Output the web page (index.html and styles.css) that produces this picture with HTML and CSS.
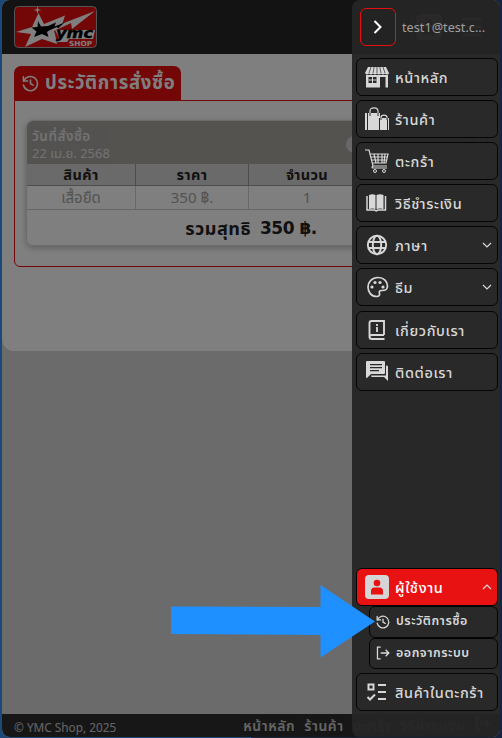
FILE: index.html
```
<!DOCTYPE html>
<html lang="th">
<head>
<meta charset="utf-8">
<title>YMC Shop</title>
<link rel="stylesheet" href="styles.css">
</head>
<body>
<svg class="defs" width="0" height="0">
  <defs>
    <symbol id="history" viewBox="0 0 24 24"><g fill="none" stroke="currentColor" stroke-width="2.200" stroke-linecap="round" stroke-linejoin="round"><path d="M2.500 8.500a10 10 0 1 1-.5 5.500"/><path d="M2 2.500V8.500H8"/><path d="M12 7v5.300l3.800 2"/></g></symbol>
    <symbol id="logout" viewBox="0 0 24 24"><path d="M8 2H2.500v20H8M8 12h14M16.500 6.500l5.500 5.500-5.500 5.500" fill="none" stroke="currentColor" stroke-width="2.200"/></symbol>
    <symbol id="down" viewBox="0 0 10 6"><path d="M1 1l4 4 4-4" fill="none" stroke="currentColor" stroke-width="1.200"/></symbol>
    <symbol id="user" viewBox="0 0 24 24"><rect width="24" height="24" rx="4" fill="currentColor"/><circle class="cut" cx="12" cy="8" r="3.300"/><path class="cut" d="M6 19.500v-3.500q0-3.500 3.500-3.500h5q3.500 0 3.500 3.500v3.500z"/></symbol>
  </defs>
</svg>
<div class="window">
  <div class="page">
    <header class="topbar">
      <svg class="logo" viewBox="0 0 83 42">
        <rect x=".5" y=".5" width="82" height="41" rx="4" fill="#e60c0c" stroke="#aaa"/>
        <path d="M24.500 7l5.500 11 21-8.500-2.500 8L81 5 58 23l-1-6-17 8 1 3 2 10-15-5-17 8 6-13L2 26l16-5z" fill="#fff"/>
        <path d="M24 15l3 5.500 7-.5 8-3.500-1.500 4 10-4L44 22.500l-1-1.500-8 3.500-2 1.500 1.500 5-6.500-3-8 3 2.500-5.500-5-4 6-.5z" fill="#000"/>
        <path d="M23.500 0l.8 3.200 3.200.8-3.200.8-.8 3.200-.8-3.200-3.200-.8 3.200-.8z" fill="#fff"/>
        <path d="M41 24h40l-2 9H55l-2 3H42l3-4z" fill="#fff"/>
        <text x="42" y="31.500" textLength="37" lengthAdjust="spacingAndGlyphs" class="brand">ymc</text>
        <text x="55" y="39.500" textLength="23" lengthAdjust="spacingAndGlyphs" class="brand-sub">SHOP</text>
      </svg>
      <div class="tools">
        <span class="tool"><svg class="tool-user" width="26" height="26"><use href="#user"/></svg></span>
        <span class="tool"><svg width="24" height="24" viewBox="0 0 24 24"><path d="M2 4h20M2 12h20M2 20h20" stroke="#fff" stroke-width="3"/></svg></span>
      </div>
    </header>
    <main>
      <h1><svg width="17" height="17"><use href="#history"/></svg><span>ประวัติการสั่งซื้อ</span></h1>
      <section class="panel">
        <article class="order">
          <div class="order-head">
            <div><div class="t-date">วันที่สั่งซื้อ</div><div>22 เม.ย. 2568</div></div>
            <span class="pill">รอชำระเงิน</span>
          </div>
          <div class="row head"><span>สินค้า</span><span>ราคา</span><span>จำนวน</span><span>รวม</span></div>
          <div class="row"><span>เสื้อยืด</span><span>350 ฿.</span><span>1</span><span>350 ฿.</span></div>
          <div class="total"><span>รวมสุทธิ</span><span class="sum">350 ฿.</span></div>
        </article>
      </section>
    </main>
    <footer><span class="copy">© YMC Shop, 2025</span><nav><span>หน้าหลัก</span><span>ร้านค้า</span><span>ตะกร้า</span><span>วิธีชำระเงิน</span><svg width="15" height="15"><use href="#logout"/></svg></nav></footer>
  </div>
  <div class="shade"></div>
  <aside class="drawer">
    <div class="account">
      <button class="close"><svg width="10" height="14" viewBox="0 0 10 14"><path d="M1.500 1l6 6-6 6" fill="none" stroke="#fff" stroke-width="2"/></svg></button>
      <span class="email">test1@test.c...</span>
    </div>
    <nav class="menu">
      <a class="item"><svg class="icon" viewBox="0 0 24 24"><path d="M3 2h18l3 6q0 1.500-2 1.500T20 8.500q-2 2-4 0-2 2-4 0-2 2-4 0-2 2-4 0Q3 9.500 2 9.500T0 8z" fill="currentColor"/><path d="M6 2L4 8M9.200 2L8 8M12 2v6M14.800 2L16 8M18 2l2 6" stroke="#292929" stroke-width=".7"/><path fill-rule="evenodd" d="M1 10h22v12.500H1zM3.500 12v6h8v-6zM15 12v10.500h5.500V12z" fill="currentColor"/><path d="M7.500 12v6M3.500 15h8" stroke="currentColor"/></svg><span>หน้าหลัก</span></a>
      <a class="item"><svg class="icon" viewBox="0 0 24 24"><path d="M0 6h2v17H0zM3 6h12v5h-1v12H3zM15 11h7v12h-7zM23 11h1v12h-1z" fill="currentColor"/><path d="M5 8V4q0-3.200 4-3.200T13 4v4M16 13v-2.500q0-2.300 3-2.300t3 2.300V13" fill="none" stroke="currentColor" stroke-width="1.200"/><path d="M5 6v3M13 6v3M16 11v2M22 11v2" stroke="#292929"/></svg><span>ร้านค้า</span></a>
      <a class="item"><svg class="icon" viewBox="0 0 24 24"><path d="M0 1h4l4 16h14M5 5h18l-2 9H7.500M6 8h16M7 11h15M9 5l2 9M13 5v9M17 5v9M20 5l-1 9M8 17q-2 2 0 2h14" fill="none" stroke="currentColor" stroke-width="1.200"/><circle cx="10" cy="22" r="1.500" fill="none" stroke="currentColor"/><circle cx="19" cy="22" r="1.500" fill="none" stroke="currentColor"/></svg><span>ตะกร้า</span></a>
      <a class="item"><svg class="icon" viewBox="0 0 24 24"><path d="M4 4Q7.500 2.500 10.500 4v14q-3-1-6.500 0zM11.500 4q3.500-1.500 7 0v14q-3.500-1-7 0z" fill="currentColor"/><path d="M2 5v14h7.500l1.700 1 1.700-1H20.500V5" fill="none" stroke="currentColor" stroke-width="1.500"/></svg><span>วิธีชำระเงิน</span></a>
      <a class="item"><svg class="icon" viewBox="0 0 24 24"><g fill="none" stroke="currentColor" stroke-width="1.900"><circle cx="12" cy="12" r="9.200"/><ellipse cx="12" cy="12" rx="4.200" ry="9.200"/><path d="M3.500 9h17M3.500 15h17"/></g></svg><span>ภาษา</span><svg class="chev" width="10" height="6"><use href="#down"/></svg></a>
      <a class="item"><svg class="icon" viewBox="0 0 24 24"><path d="M12 21.500c-6 0-9-4.500-9-9.500S7 2.500 13 2.500s9.500 4 9.500 8.500-3 4.500-5.500 4.500c-3 0-3 1.500-2.500 3s-.5 3-2.500 3z" fill="none" stroke="currentColor" stroke-width="1.700"/><g fill="currentColor"><circle cx="7" cy="12" r="1.600"/><circle cx="10" cy="7.500" r="1.600"/><circle cx="15" cy="7.500" r="1.600"/><circle cx="18" cy="12" r="1.600"/></g></svg><span>ธีม</span><svg class="chev" width="10" height="6"><use href="#down"/></svg></a>
      <a class="item about"><svg class="icon" viewBox="0 0 24 24"><path d="M19 17H7q-2.500 0-2.500 2T7 21h12.500M4.500 19V5q0-2 2-2H19v14" fill="none" stroke="currentColor" stroke-width="1.900"/><path d="M12 6v2M12 9v5" stroke="currentColor" stroke-width="1.800"/></svg><span>เกี่ยวกับเรา</span></a>
      <a class="item"><svg class="icon" viewBox="0 0 24 24"><path fill-rule="evenodd" d="M2 1h17q1 0 1 1v11q0 1-1 1H6l-4 4q-1 0-1-1V2q0-1 1-1zM5 4v1.300h12V4zM5 7v1.300h12V7zM5 10v1.300h9V10zM21 5.500q2 0 2 1V21l-4-4H7q-1 0-1-1.500h15z" fill="currentColor"/></svg><span>ติดต่อเรา</span></a>
      <div class="account-menu">
        <a class="item active"><svg class="icon" viewBox="0 0 24 24"><use href="#user"/></svg><span>ผู้ใช้งาน</span><svg class="chev up" width="10" height="6"><use href="#down"/></svg></a>
        <a class="sub"><svg width="14" height="14"><use href="#history"/></svg><span>ประวัติการซื้อ</span></a>
        <a class="sub"><svg width="14" height="14"><use href="#logout"/></svg><span>ออกจากระบบ</span></a>
      </div>
      <a class="item"><svg class="icon" viewBox="0 0 24 24"><path d="M3.500 4.500h5v5h-5zM13 5h8M13 12h8M13 19h8M2.500 17l2.500 2.500 5-5" fill="none" stroke="currentColor" stroke-width="2"/></svg><span>สินค้าในตะกร้า</span></a>
    </nav>
  </aside>
</div>
<svg class="arrow" viewBox="0 0 205 74"><path d="M0 21.500l149.500.5V0L204 36.500l-54.500 36V50L0 49z" fill="#1e90ff"/></svg>
</body>
</html>
```
FILE: styles.css
```
* { box-sizing: border-box; }
body {
  margin: 0;
  width: 502px;
  height: 738px;
  overflow: hidden;
  background: linear-gradient(90deg, #1b4a78 0 50%, #16233f 50%);
  font-family: "Noto Sans", "Noto Sans Thai", "DejaVu Sans", sans-serif;
  white-space: nowrap;
}
svg { display: block; flex: none; }
.defs { position: absolute; }
.window {
  position: relative;
  width: 498px;
  height: 737px;
  margin-left: 2px;
  overflow: hidden;
  border-radius: 8px;
  background: #d6d6d6;
}
.page { height: 737px; display: flex; flex-direction: column; }
.topbar {
  height: 54px;
  flex: none;
  display: flex;
  align-items: flex-start;
  justify-content: space-between;
  padding: 6px 10px 0 12px;
  background: #272727;
  box-shadow: 0 1px 5px #0005;
}
.logo { width: 83px; height: 42px; }
.brand { font: italic 900 14px "DejaVu Sans", sans-serif; fill: #000; stroke: #000; stroke-width: .4; }
.brand-sub { font: 900 7px "DejaVu Sans", sans-serif; fill: #fff; }
.tools { display: flex; gap: 7px; margin-top: 3px; }
.tool {
  width: 36px;
  height: 36px;
  display: grid;
  place-items: center;
  border: 1px solid #666;
  border-radius: 6px;
}
.tool-user { color: #fff; }
.tool .cut { fill: #222; }
main { height: 297px; flex: none; padding: 12px 12px 0; background: #fff; border-radius: 0 0 12px 12px; }
h1 {
  margin: 0;
  width: 167px;
  height: 34px;
  display: flex;
  align-items: center;
  gap: 6px;
  padding-left: 8px;
  border-radius: 7px 7px 0 0;
  background: #e60c0c;
  color: #fff;
  font-size: 18.5px;
  font-weight: 700;
  letter-spacing: .65px;
}
.panel { height: 167px; padding: 19px 11px; border: 1px solid #e60c0c; border-radius: 0 0 6px 6px; }
.order {
  height: 126px;
  overflow: hidden;
  border: 1px solid #d8d8d8;
  border-radius: 7px;
  box-shadow: 0 2px 6px #0004;
}
.order-head {
  height: 43px;
  display: flex;
  align-items: center;
  justify-content: space-between;
  padding: 4px 6px 0 5px;
  background: #a8a6a1;
  color: #fff;
  font-size: 13px;
  line-height: 17px;
}
.order-head > div { opacity: .7; }
.t-date { font-size: 13.5px; font-weight: 600; letter-spacing: .5px; }
.pill { width: 123px; height: 17px; border-radius: 9px; background: #d0cfd2; color: #333; text-align: center; }
.row { height: 24px; display: grid; grid-template-columns: 109px 113px 117px 1fr; line-height: 23px; font-size: 15px; color: #a6a6a6; }
.row span { text-align: center; border: solid #d0d0d0; border-width: 0 1px 1px 0; height: 24px; }
.head { height: 22px; line-height: 21px; background: #d4d4d4; color: #222; font-size: 14.5px; font-weight: 700; letter-spacing: .4px; }
.head span { height: 22px; border-color: #999; }
.total { display: flex; gap: 9px; justify-content: center; padding-top: 1px; color: #222; font-size: 18px; font-weight: 700; line-height: 34px; letter-spacing: .5px; }
.sum { font-family: "DejaVu Sans", "Noto Sans", sans-serif; font-size: 17px; letter-spacing: -.5px; }
footer {
  height: 23px;
  flex: none;
  margin-top: auto;
  display: flex;
  justify-content: space-between;
  align-items: center;
  padding: 2px 10px 0 12px;
  background: #2e2e2e;
  color: #fff;
  font-size: 11.8px;
}
footer span { opacity: .75; }
footer nav { display: flex; gap: 9px; font-size: 13.9px; font-weight: 600; letter-spacing: .6px; }
.shade { position: absolute; inset: 0; background: rgba(0, 0, 0, .5); }
.drawer {
  position: absolute;
  top: 0;
  right: 0;
  width: 148px;
  height: 737px;
  display: flex;
  flex-direction: column;
  padding: 8px 2px 26px 4px;
  border-radius: 8px;
  background: rgba(37, 37, 37, .96);
  color: #d8d8d8;
}
.account { display: flex; align-items: center; gap: 6px; height: 38px; margin: 0 0 12px 4px; }
.close { width: 36px; height: 38px; display: grid; place-items: center; padding: 0; border: 1px solid #e60f0f; border-radius: 6px; background: #232323; }
.email { color: #a0a0a0; font-size: 12.7px; }
.menu { flex: 1; display: flex; flex-direction: column; gap: 4px; }
.item {
  height: 38px;
  flex: none;
  display: flex;
  align-items: center;
  gap: 6px;
  padding: 0 5px 0 8px;
  border: 1px solid #050505;
  border-radius: 6px;
  background: #292929;
  font-size: 14.5px;
  font-weight: 500;
  letter-spacing: .6px;
}
.item span { padding-top: 2px; }
.icon { width: 24px; height: 24px; }
.about { margin-top: 1px; }
.chev { margin-left: auto; }
.up { transform: rotate(180deg); }
.account-menu { margin-top: auto; }
.active { background: #e81212; color: #fff; }
.active .icon, .active .chev { color: #d5d5d5; }
.cut { fill: #e81212; }
.sub {
  height: 31.5px;
  margin-left: 13px;
  display: flex;
  align-items: center;
  gap: 6px;
  padding-left: 6px;
  border: 1px solid #050505;
  border-radius: 6px;
  background: #292929;
  font-size: 12.5px;
  font-weight: 600;
  letter-spacing: .5px;
}
.arrow { position: absolute; left: 171px; top: 585px; width: 205px; height: 74px; }
```
